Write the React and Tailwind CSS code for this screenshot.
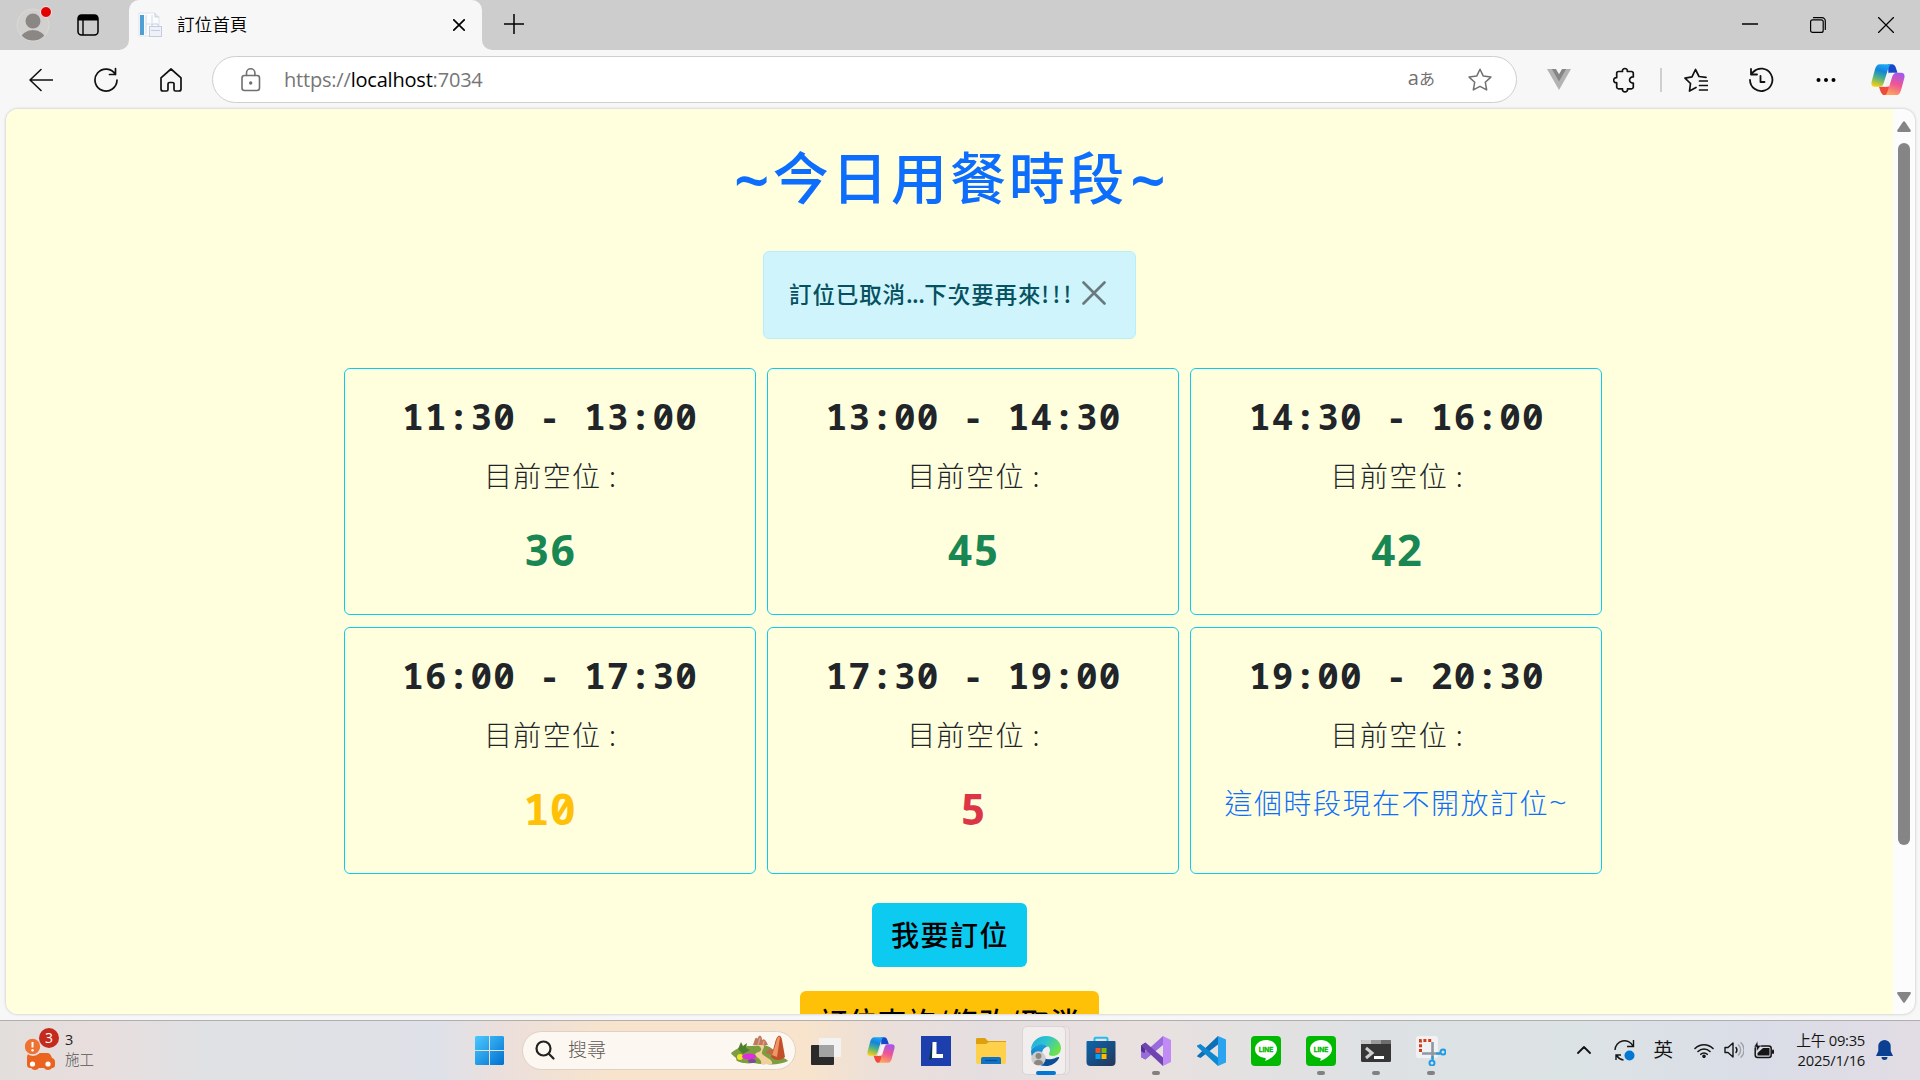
import React from "react";

const ui = "font-['Open_Sans','Noto_Sans_CJK_TC',sans-serif]";
const han = "font-['Noto_Sans_CJK_TC',sans-serif]";
const mono = "font-['Noto_Sans_Mono','DejaVu_Sans_Mono',monospace]";

const slots = [
  { time: "11:30 - 13:00", seats: "36", tone: "text-[#198754]" },
  { time: "13:00 - 14:30", seats: "45", tone: "text-[#198754]" },
  { time: "14:30 - 16:00", seats: "42", tone: "text-[#198754]" },
  { time: "16:00 - 17:30", seats: "10", tone: "text-[#ffc107]" },
  { time: "17:30 - 19:00", seats: "5", tone: "text-[#dc3545]" },
  { time: "19:00 - 20:30", seats: null, tone: "text-[#0d6efd]" },
];

function Line({ children, w = 24, h = 24, sw = 1.6, className = "", box }) {
  return (
    <svg width={w} height={h} viewBox={box || `0 0 ${w} ${h}`} fill="none" stroke="currentColor" strokeWidth={sw} strokeLinecap="round" strokeLinejoin="round" className={`shrink-0 ${className}`}>
      {children}
    </svg>
  );
}

function Favicon() {
  return (
    <svg width="24" height="26" viewBox="0 0 24 26" className="shrink-0">
      <path d="M1 1h16l4 4v19H1z" fill="#fbfcfe" stroke="#dfe3ec" strokeWidth="1" />
      <rect x="2" y="3" width="4" height="20" fill="#4e9fd3" />
      <path d="M8 3v19M14 3v8M8 12h6" stroke="#d4dbe9" strokeWidth="1" />
      <path d="M17 1v4h4" fill="#e5e9f1" stroke="#c9cfdb" strokeWidth="1" />
      <rect x="11.500" y="14.500" width="12" height="10" fill="#eef1f8" stroke="#c3cce0" />
      <path d="M14 14v-2h6v2M13 18.500h9" stroke="#c3cce0" fill="none" />
    </svg>
  );
}

function Copilot({ size, id }) {
  return (
    <svg width={size} height={size * 0.93} viewBox="0 0 34 31" className="shrink-0">
      <defs>
        <linearGradient id={`${id}a`} x1="0.6" y1="0" x2="0.3" y2="1">
          <stop offset="0" stopColor="#1ea8f5" />
          <stop offset=".3" stopColor="#1284dc" />
          <stop offset=".6" stopColor="#4bb08a" />
          <stop offset="1" stopColor="#f6cf13" />
        </linearGradient>
        <linearGradient id={`${id}b`} x1="0.7" y1="0" x2="0.4" y2="1">
          <stop offset="0" stopColor="#a357ee" />
          <stop offset=".5" stopColor="#ee5596" />
          <stop offset="1" stopColor="#ffa35c" />
        </linearGradient>
      </defs>
      <path d="M17 0h4c2 0 3 1 4 4l1.500 4.500h-4c-3 0-4 1-5 3z" fill="#1649c9" />
      <path d="M8 22.500h7l2.500-6 .5 8c-1 4-2 6.500-4 6.500-3 0-4-2-6-8.500z" fill="#ee4b3a" />
      <path d="M9 0h12c-2 0-3 2-4 5l-4 13c-1 3-2 4.500-5 4.500H4c-4 0-4-3.500-3-6.500L4 5c1-3 2-5 5-5z" fill={`url(#${id}a)`} />
      <path d="M25 31H13c2 0 3-2 4-5l4-13c1-3 2-4.500 5-4.500h4c4 0 4 3.500 3 6.500l-3 11c-1 3-2 5-5 5z" fill={`url(#${id}b)`} />
      <path d="M17.500 8.500h5c-1 1-1.500 3-2 4.500l-3 9.500h-5c1-1 1.200-2 1.700-3.500l2.300-7.500z" fill="#f5f2f6" />
    </svg>
  );
}

function TabStrip() {
  return (
    <div className="flex h-[50px] bg-[#cdcdcd] text-black">
      <div className="flex w-[129px] items-center pl-[16px]">
        <div className="relative">
          <svg width="34" height="34" viewBox="0 0 34 34">
            <defs>
              <clipPath id="face"><circle cx="17" cy="17" r="15.500" /></clipPath>
            </defs>
            <circle cx="17" cy="17" r="16" fill="#d2d0ce" stroke="#dcdad7" strokeWidth="1" />
            <g clipPath="url(#face)" fill="#8a8785">
              <circle cx="17" cy="13" r="7.500" />
              <ellipse cx="17" cy="32" rx="12.500" ry="10" />
            </g>
          </svg>
          <span className="absolute -top-0.5 right-[-2px] h-[12px] w-[12px] rounded-full border border-[#ececec] bg-[#e30000]" />
        </div>
        <svg width="22" height="22" viewBox="0 0 22 22" className="ml-[27px]">
          <rect x="1" y="1" width="20" height="20" rx="3.500" fill="none" stroke="#000" strokeWidth="1.500" />
          <path d="M1 6.500V4a3 3 0 0 1 3-3h14a3 3 0 0 1 3 3v2.500z" />
          <path d="M6 6v15" stroke="#000" strokeWidth="1.400" />
        </svg>
      </div>
      <div className="relative flex w-[353px] items-center rounded-t-[10px] bg-[#f7f7f7] pl-[9px]">
        <svg width="10" height="10" className="absolute bottom-0 -left-[10px]"><path d="M10 0v10H0A10 10 0 0 0 10 0z" fill="#f7f7f7" /></svg>
        <svg width="10" height="10" className="absolute -right-[10px] bottom-0"><path d="M0 0v10h10A10 10 0 0 1 0 0z" fill="#f7f7f7" /></svg>
        <Favicon />
        <span className={`${han} ml-[15px] flex-1 pb-[2px] text-[17.600px] font-[350]`}>訂位首頁</span>
        <Line w={12} h={12} sw={1.7} className="mr-[17px]"><path d="M.8.8l10.400 10.400M11.200.8L.8 11.200" /></Line>
      </div>
      <div className="flex flex-1 items-center pl-[22px]">
        <Line w={20} h={20} sw={1.5} className="mb-[2px]"><path d="M10 0v20M0 10h20" /></Line>
        <div className="ml-auto flex items-center">
          <div className="flex w-[68px] justify-center pb-[2px]"><Line w={16} h={2} sw={1.4}><path d="M0 1h16" /></Line></div>
          <div className="flex w-[68px] justify-center">
            <Line w={16} h={16} sw={1.2}><rect x=".6" y="2.800" width="12.600" height="12.600" rx="2" /><path d="M3.500.7H12a3.300 3.300 0 0 1 3.300 3.300v8.500" /></Line>
          </div>
          <div className="flex w-[68px] justify-center"><Line w={16} h={16} sw={1.2}><path d="M.5.5l15 15M15.500.5l-15 15" /></Line></div>
        </div>
      </div>
    </div>
  );
}

function Toolbar() {
  return (
    <div className="flex h-[59px] items-center bg-[#f7f7f7] text-[#111]">
      <Line w={24} h={24} className="ml-[29px]"><path d="M23.500 12H1M12 1.500L1 12l11 10.500" /></Line>
      <Line w={26} h={26} sw={1.7} className="ml-[40px]"><path d="M22.500 7.500A11 11 0 1 0 24 13M22.500 1.500v6h-6" /></Line>
      <Line w={22} h={24} sw={1.7} className="ml-[41px]"><path d="M1 9.800L11 1l10 8.800V21a2 2 0 0 1-2 2h-3.500a1.500 1.500 0 0 1-1.500-1.500V16a1.500 1.500 0 0 0-1.500-1.500h-3A1.500 1.500 0 0 0 8 16v5.500A1.500 1.500 0 0 1 6.500 23H3a2 2 0 0 1-2-2z" /></Line>
      <div className="ml-[30px] flex h-[47px] w-[1305px] items-center rounded-full border border-[#cecece] bg-white text-[#707070]">
        <Line w={20} h={24} sw={1.6} className="ml-[28px]"><rect x="1" y="7.500" width="17.500" height="15" rx="2.500" /><path d="M5.500 7.500V5a4.200 4.200 0 0 1 8.400 0v2.500" /><circle cx="9.700" cy="15" r=".9" fill="currentColor" /></Line>
        <span className={`${ui} ml-[23px] flex-1 text-[20px] tracking-[-0.200px] text-[#767676]`}>https://<span className="text-black">localhost</span>:7034</span>
        <span className="mr-[33px] flex items-baseline pb-[3px] whitespace-nowrap"><span className="font-['Open_Sans'] text-[20px] leading-none">a</span><span className={`${han} text-[16px] leading-none`}>あ</span></span>
        <Line w={24} h={24} sw={1.5} className="mr-[24px]"><path d="M12 1.200l3.300 6.900 7.600 1-5.600 5.200 1.400 7.600L12 18.300 5.300 21.900l1.400-7.600L1.100 9.100l7.600-1z" /></Line>
      </div>
      <svg width="24" height="21" viewBox="0 0 24 21" className="ml-[30px]"><path d="M0 0h24L12 21z" fill="#b3b3b3" /><path d="M4.800 0H9l3 5 3-5h4.200L12 12.600z" fill="#868686" /><path d="M9 0h6l-3 5z" fill="#f7f7f7" /></svg>
      <Line w={24} h={26} sw={1.7} className="ml-[42px]"><path d="M5.500 4.500h4c-.8-4 5.600-4 4.800 0h4.200A1.800 1.800 0 0 1 20.300 6.300V10c-5-.6-5 6.500 0 6v4a1.800 1.800 0 0 1-1.800 1.800h-4c.8 4.200-5.800 4.200-5 0h-4A1.800 1.800 0 0 1 3.700 20v-4.300c-4 .6-4-5.600 0-5V6.300A1.800 1.800 0 0 1 5.500 4.500z" /></Line>
      <span className="ml-[23px] h-[24px] w-[2px] bg-[#cfcfcf]" />
      <Line w={24} h={24} sw={1.7} className="ml-[22px]"><path d="M12 19.500L5.500 23l1-7.500L1 10.200l7-1.400L11.500 1.500 15 8.500l7 .8M15.500 13h8M15.500 17.500h8M15.500 22h8" /></Line>
      <Line w={26} h={26} sw={1.8} className="ml-[40px]"><path d="M2 13a11.200 11.200 0 1 0 3.200-8L3 7M3 2v5.500h6M12.500 9v6h4" /></Line>
      <svg width="20" height="6" viewBox="0 0 20 6" className="ml-[42px]"><circle cx="2.500" cy="3" r="2" /><circle cx="10" cy="3" r="2" /><circle cx="17.500" cy="3" r="2" /></svg>
      <div className="ml-[35px]"><Copilot size={34} id="top" /></div>
    </div>
  );
}

function Slot({ time, seats, tone }) {
  return (
    <div className="flex h-[247px] flex-col items-center rounded-[6px] border border-[#0dcaf0]">
      <div className={`${mono} mt-[24px] h-[48px] pl-[1px] text-[36px] leading-[48px] font-bold tracking-[1.150px] whitespace-pre text-[#212529]`}>{time}</div>
      <div className={`${han} mt-[13px] h-[42px] pl-[2px] text-[28px] leading-[42px] font-light tracking-[1.400px] whitespace-pre text-[#212529]`}>目前空位 :</div>
      {seats ? (
        <div className={`${mono} mt-[23px] h-[60px] text-[43.500px] leading-[60px] font-bold ${tone}`}>{seats}</div>
      ) : (
        <div className={`${han} mt-[26px] h-[42px] text-[28px] leading-[42px] font-light tracking-[1.500px] whitespace-nowrap ${tone}`}>
          這個時段現在不開放訂位<span className="font-['Open_Sans'] text-[31px] leading-none">~</span>
        </div>
      )}
    </div>
  );
}

function Page() {
  return (
    <div className="flex h-[905px] overflow-hidden rounded-[12px] bg-[#fcfcfc] shadow-[0_0_3px_rgba(0,0,0,0.25)]">
      <main className={`${han} flex w-[1887px] flex-col items-center overflow-hidden bg-[#ffffde]`}>
        <h1 className="mt-[26px] flex h-[80px] justify-center pl-[4px] text-[56px] leading-[80px] font-medium tracking-[3.100px] whitespace-nowrap text-[#0d6efd]">
          <span className="mt-[4px] font-['Noto_Sans'] text-[62px] font-semibold">~</span>今日用餐時段<span className="mt-[4px] ml-[3px] font-['Noto_Sans'] text-[62px] font-semibold">~</span>
        </h1>
        <div className="mt-[36px] flex h-[88px] w-[373px] shrink-0 rounded-[6px] border border-[#b6effb] bg-[#cff4fc] pl-[25px] text-[#055160]">
          <span className="mt-[25px] h-[32px] w-[293px] text-[22.500px] leading-[32px] font-medium tracking-[0.900px] whitespace-nowrap">
            訂位已取消<span className="tracking-[-0.600px]">...</span>下次要再來<span className="tracking-[3.300px]">!!!</span>
          </span>
          <Line w={24} h={24} sw={2.6} className="mt-[29px] text-[#677a7e]"><path d="M1.500 1.500l21 21M22.500 1.500l-21 21" /></Line>
        </div>
        <div className="mt-[29px] ml-[47px] grid shrink-0 grid-cols-[412px_412px_412px] gap-x-[11.300px] gap-y-[12px]">
          {slots.map((s) => <Slot key={s.time} {...s} />)}
        </div>
        <button className="mt-[29px] h-[64px] w-[155px] shrink-0 rounded-[6px] bg-[#0dcaf0] pb-[3px] pl-[1px] text-[28px] font-medium tracking-[1.500px] text-black">我要訂位</button>
        <button className="mt-[24px] h-[64px] w-[299px] shrink-0 rounded-[6px] bg-[#ffc107] pb-[4px] text-[28px] font-medium tracking-[1.500px] whitespace-nowrap text-black">訂位查詢/修改/取消</button>
      </main>
      <div className="flex w-[22px] flex-col items-center pt-[12px]">
        <svg width="14" height="11" viewBox="0 0 14 11"><path d="M6 .8a1.300 1.300 0 0 1 2 0l5.700 8.400c.4.8 0 1.800-1 1.800H1.300c-1 0-1.400-1-1-1.800z" fill="#858585" /></svg>
        <div className="mt-[11px] h-[702px] w-[12px] rounded-full bg-[#858585]" />
        <svg width="14" height="11" viewBox="0 0 14 11" className="mt-[147px]"><path d="M6 10.200a1.300 1.300 0 0 0 2 0l5.700-8.400C14.100 1 13.700 0 12.700 0H1.300C.3 0-.1 1 .3 1.800z" fill="#858585" /></svg>
      </div>
    </div>
  );
}

function Widgets() {
  return (
    <svg width="32" height="38" viewBox="0 0 32 38">
      <path d="M5 20h17c3 0 4 2 5 5 2 .5 3 2 3 4v3c0 2-1 3-3 3a5 5 0 0 1-8 0h-5a5 5 0 0 1-8 0c-3 0-4-1-4-4v-6c0-3 1-5 3-5z" fill="#ea6420" />
      <circle cx="8" cy="14" r="9" fill="#e6dfde" />
      <circle cx="7.500" cy="13.500" r="7.700" fill="#ee7332" />
      <path d="M7.500 9v5.500" stroke="#fff" strokeWidth="2" />
      <circle cx="7.500" cy="17.300" r="1.200" fill="#fff" />
      <circle cx="7.500" cy="31" r="2.600" fill="#fff" />
      <circle cx="23" cy="31" r="2.600" fill="#fff" />
    </svg>
  );
}

function Landscape() {
  return (
    <svg width="57" height="31" viewBox="0 0 57 31" className="shrink-0">
      <path d="M0 18c6-5 12-7 20-7l12-1c6 0 12 6 16 10 4 3 8 4 9 6-6 3-15 4-22 3-5 1-9-1-13-1-6 1-14 0-17-3 2-2-4-4-5-7z" fill="#7d9e3f" />
      <path d="M19 10c8-1 12 2 11 5s-8 2-5 6c3 3 6 4 5 8h11c2-5-12-8-10-12 1-4 5-7-2-8z" fill="#f3cf9c" />
      <path d="M22 10l2-6c1-2 2-1 2 0l2-3c2-1 3 1 3 4 2-2 3 0 4 1l2 4z" fill="#c07860" />
      <path d="M27 10l2-7M32 10l1-4" stroke="#e0a58e" strokeWidth="1.200" />
      <path d="M34 18l4-4 4 1v5z" fill="#c3674b" />
      <path d="M40 22l4-14c2-9 6-9 7-3l3 17c-4 4-10 4-14 0z" fill="#c24f2a" />
      <path d="M41 20l4-12c1-6 3-7 4-6l-3 20z" fill="#ef9667" />
      <path d="M7 14l3-7 2 4 4-3-1 5 4 2-7 4z" fill="#4e7f2c" />
      <circle cx="9" cy="22" r="3" fill="#f4e429" />
      <ellipse cx="18" cy="21.500" rx="7" ry="3" fill="#e32ae0" />
      <ellipse cx="21" cy="26" rx="4" ry="2" fill="#7d4a9c" />
    </svg>
  );
}

function LineLogo() {
  return (
    <svg width="30" height="30" viewBox="0 0 30 30">
      <rect width="30" height="30" rx="4" fill="#00b900" />
      <path d="M15 4C9 4 4 8 4 13c0 5 4 8 10 9 1 0 1 1 0 3 5-2 12-6 12-12 0-5-5-9-11-9z" fill="#fff" />
      <text x="15" y="16.300" textAnchor="middle" fontSize="6.600" fontWeight="700" fontFamily="Inter" fill="#00b900" stroke="#00b900" strokeWidth=".3">LINE</text>
    </svg>
  );
}

const apps = [
  {
    name: "taskview",
    icon: <svg width="32" height="30" viewBox="0 0 32 30"><rect x="1" y="9" width="23" height="20" rx="1" fill="#2a2a2a" /><rect x="9" y="2" width="22" height="19" rx="1" fill="#f2f2f2" /><rect x="9" y="9" width="15" height="12" fill="#a3a3a3" /></svg>,
  },
  { name: "copilot", icon: <Copilot size={28} id="task" /> },
  {
    name: "lapp",
    icon: <svg width="30" height="30" viewBox="0 0 30 30"><rect width="30" height="30" fill="#1c3fad" /><path d="M11 6L8 24l4-2h6z" fill="#04353f" /><path d="M11.500 6h4v12H22v4H11z" fill="#fff" /></svg>,
  },
  {
    name: "files",
    icon: <svg width="30" height="26" viewBox="0 0 30 26"><path d="M0 1.500C0 .5.500 0 1.500 0H9l3 3h18v5H0z" fill="#dea00c" /><path d="M0 6h10l3-2h17v20a2 2 0 0 1-2 2H2a2 2 0 0 1-2-2z" fill="#ffd04a" /><path d="M5 26v-5a2 2 0 0 1 2-2h16a2 2 0 0 1 2 2v5z" fill="#0f73c7" /><path d="M9 22.500h12" stroke="#0a4d91" strokeWidth="1.200" /></svg>,
  },
  {
    name: "edge",
    open: "active",
    icon: (
      <svg width="30" height="30" viewBox="0 0 30 30">
        <defs>
          <linearGradient id="ea" x1="0" y1="0" x2="1" y2=".5"><stop offset="0" stopColor="#23a8e0" /><stop offset=".5" stopColor="#2fc3cf" /><stop offset="1" stopColor="#6de24b" /></linearGradient>
          <linearGradient id="eb" x1="0" y1="0" x2="0" y2="1"><stop offset="0" stopColor="#1aa0e0" /><stop offset="1" stopColor="#0a62b4" /></linearGradient>
        </defs>
        <path d="M0 14C0 6 7 0 15 0c9 0 15 6 15 12 0 5-4 8-8 8-3 0-4-1-4-2s1-2 1-4c0-3-3-5-7-5C6 9 1 11 0 14z" fill="url(#ea)" />
        <path d="M0 15c1-4 6-6.500 11-6.500 3 0 5 1 6 2-4 .5-6 4-6 7 0 6 5 9 10 9-2 2-4 3.500-7 3.500C6 30 0 23 0 15z" fill="url(#eb)" />
        <path d="M11 17c0 6 6 7 10 6 3-.5 5-2 6.500-2 .8 0 .8.500.3 1.400C25 27 20 30 15 30c-5-3-6-9-4-13z" fill="#0d4f99" />
        <circle cx="7.500" cy="22.500" r="7.200" fill="#cfcdcb" />
        <circle cx="7.500" cy="20" r="3" fill="#8a8785" />
        <path d="M3 27.500c0-5 9-5 9 0-2 2.300-7 2.300-9 0z" fill="#8a8785" />
      </svg>
    ),
  },
  {
    name: "store",
    icon: <svg width="30" height="30" viewBox="0 0 30 30"><defs><linearGradient id="st" x1="0" y1="0" x2="1" y2="1"><stop offset="0" stopColor="#0b66ad" /><stop offset="1" stopColor="#25355a" /></linearGradient></defs><path d="M8.500 6V3a1.300 1.300 0 0 1 1.300-1.300h10.400A1.300 1.300 0 0 1 21.500 3v3" fill="none" stroke="#20bdf1" strokeWidth="2" /><path d="M.5 6a1 1 0 0 1 1-1h27a1 1 0 0 1 1 1v20a4 4 0 0 1-4 4h-21a4 4 0 0 1-4-4z" fill="url(#st)" /><path d="M9.500 12h5v5h-5z" fill="#f25022" /><path d="M15.500 12h5v5h-5z" fill="#7fba00" /><path d="M9.500 18h5v5h-5z" fill="#00a4ef" /><path d="M15.500 18h5v5h-5z" fill="#ffb900" /></svg>,
  },
  {
    name: "vs",
    open: "idle",
    icon: <svg width="30" height="30" viewBox="0 0 30 30"><path d="M0 9.500L4.500 6.500v17L0 21z" fill="#52308f" /><path d="M0 21l4.500 2.500L22 9V0L3 17l-3-2z" fill="#9a6bdc" /><path d="M4.500 6.500L22 21.500V30L0 9.500z" fill="#7044b0" /><path d="M22 0l8 4v22l-8 4z" fill="#c08bf5" /></svg>,
  },
  {
    name: "vscode",
    icon: <svg width="30" height="30" viewBox="0 0 30 30"><path d="M1.500 19.500L22 0v8.500L4.500 22 1 20.600z" fill="#0b70b8" /><path d="M1 9.500L4.500 8 22 21.500V30L1 10.600z" fill="#1088d0" /><path d="M22 0l8 3.500v23L22 30z" fill="#2aa3f0" /></svg>,
  },
  { name: "line1", icon: <LineLogo /> },
  { name: "line2", open: "idle", icon: <LineLogo /> },
  {
    name: "terminal",
    open: "idle",
    icon: <svg width="30" height="22" viewBox="0 0 30 22"><rect width="30" height="22" rx="1.500" fill="#363636" /><path d="M0 4V1.500C0 .5.500 0 1.500 0H10v4z" fill="#cacaca" /><path d="M10 0h10v4H10z" fill="#9a9a9a" /><path d="M20 0h8.500c1 0 1.500.5 1.500 1.500V4H20z" fill="#6d6d6d" /><path d="M5 8l6 5-6 5" fill="none" stroke="#cfcfcf" strokeWidth="3" /><rect x="13" y="16" width="10" height="3" fill="#fff" /></svg>,
  },
  {
    name: "snip",
    open: "idle",
    icon: <svg width="30" height="30" viewBox="0 0 30 30"><rect width="22" height="22" rx="2.500" fill="#f1f1f4" /><path d="M4.500 16V4.500H16" fill="none" stroke="#d23c12" strokeWidth="3" strokeDasharray="3 1.800" /><path d="M16.500 6v17M6 17.500h18" stroke="#8d98a3" strokeWidth="2.600" /><circle cx="16" cy="27" r="2.500" fill="none" stroke="#1e9be6" strokeWidth="2" /><circle cx="27" cy="16" r="2.500" fill="none" stroke="#1e9be6" strokeWidth="2" /><path d="M16.500 20v4M20 17.500h4" stroke="#1e9be6" strokeWidth="2" /></svg>,
  },
];

function Taskbar() {
  return (
    <div className={`${ui} flex h-[60px] items-center border-t border-[#b0aeae] bg-[linear-gradient(90deg,#e2dedb_0%,#e8dedd_5%,#dfe1e4_11%,#dfe1e8_23%,#ebdfdc_26%,#f8e4cc_32%,#f8e4cc_42%,#ebdfda_46%,#e5dee0_51%,#e9e1df_59%,#dde1e4_72%,#dce3e5_82%,#dadde7_92%,#e2dce4_100%)] pb-[1px] text-[#222]`}>
      <div className="relative ml-[25px] h-[38px] w-[40px] pt-0.5">
        <Widgets />
        <span className="absolute top-[-3px] left-[14px] flex h-[20px] w-[20px] items-center justify-center rounded-full bg-[#c42b1c] text-[14px] leading-none text-white">3</span>
      </div>
      <div className="w-[410px] text-[14.500px] leading-[20px]">
        <div>3</div>
        <div className="font-light text-[#555]">施工</div>
      </div>
      <svg width="29" height="29" viewBox="0 0 29 29" className="shrink-0">
        <defs><linearGradient id="win" x1="0" y1="0" x2="1" y2="1"><stop offset="0" stopColor="#4cc9ff" /><stop offset="1" stopColor="#0070cf" /></linearGradient></defs>
        <path d="M1 0h13v14H0V1zM15 0h13l1 1v13H15zM0 15h14v14H1l-1-1zM15 15h14v13l-1 1H15z" fill="url(#win)" />
      </svg>
      <div className="ml-[18px] flex h-[39px] w-[274px] shrink-0 items-center rounded-full border border-[#dfd2c4] bg-[#fdf7f1]">
        <Line w={20} h={20} sw={2.2} className="ml-[12px]"><circle cx="8.500" cy="8.500" r="7" /><path d="M13.800 13.800l4.700 4.700" /></Line>
        <span className="ml-[13px] flex-1 text-[19px] leading-none font-light text-[#5d5a57]">搜尋</span>
        <div className="mr-[7px]"><Landscape /></div>
      </div>
      <div className="ml-[2px] flex h-[59px] pt-[1px]">
        {apps.map((a) => (
          <div key={a.name} className="relative flex w-[55px] items-center justify-center">
            {a.open === "active" && <span className="absolute top-[4px] left-[4px] h-[49px] w-[48px] rounded-[5px] border border-[#ddd5d5] bg-[#ece5e5]" />}
            {a.open === "active" && <span className="absolute top-[4px] left-[4px] h-[49px] w-[44px] rounded-[5px] border border-[#ddd5d5] bg-[#f3eeee]" />}
            <span className="relative">{a.icon}</span>
            {a.open === "active" && <span className="absolute bottom-[5px] left-[18px] h-[4px] w-[20px] rounded-full bg-[#0078d4]" />}
            {a.open === "idle" && <span className="absolute bottom-[5px] left-[24px] h-[4px] w-[8px] rounded-full bg-[#838080]" />}
          </div>
        ))}
      </div>
      <div className="ml-auto flex items-center text-[#151515]">
        <Line w={14} h={8} sw={1.8}><path d="M1 7l6-6 6 6" /></Line>
        <svg width="21" height="21" viewBox="0 0 21 21" className="ml-[23px]"><path d="M1 10A9.500 9.500 0 0 1 19 6M19.500 0v6.500H13M2 20v-5h5M2.500 15.500c2 3 4 4 7 4.500" fill="none" stroke="#151515" strokeWidth="1.400" /><circle cx="15.500" cy="15.500" r="5" fill="#0078d4" /></svg>
        <span className="ml-[18px] text-[19.500px]">英</span>
        <Line w={20} h={15} sw={1.6} className="ml-[21px]"><path d="M1 5.500a12.700 12.700 0 0 1 18 0M4 8.500a8.500 8.500 0 0 1 12 0M6.800 11.300a4.500 4.500 0 0 1 6.400 0" /><circle cx="10" cy="13.300" r="1" fill="currentColor" /></Line>
        <Line w={20} h={18} sw={1.4} className="ml-[10px]"><path d="M1 6.500h3L9 2v14l-5-4.500H1zM12 6.500a4 4 0 0 1 0 5" /><path d="M14.500 4a7 7 0 0 1 0 10M17 1.800a10 10 0 0 1 0 14.400" className="opacity-30" /></Line>
        <svg width="20" height="18" viewBox="0 0 20 18" className="ml-[10px]"><rect x="1.200" y="5" width="16" height="11.500" rx="2.500" fill="none" stroke="#151515" strokeWidth="1.500" /><path d="M9 7h6.500v7.500h-12V12z" fill="#151515" /><rect x="18" y="8.500" width="2" height="4.500" rx="1" fill="#151515" /><path d="M3.500 0L0 6h2.500v4.500L7 4.500H4z" fill="#151515" stroke="#dcdfe6" strokeWidth=".5" /></svg>
        <div className="ml-[20px] w-[71px] text-right text-[14.800px] leading-[20px] tracking-[-0.300px] whitespace-nowrap">
          <div>上午 09:35</div>
          <div>2025/1/16</div>
        </div>
        <svg width="17" height="20" viewBox="0 0 17 20" className="mr-[27px] ml-[11px]"><path d="M8.500 0a6.200 6.200 0 0 1 6.200 6.200V11L17 16H0l2.300-5V6.200A6.200 6.200 0 0 1 8.500 0zM5.500 17h6a3 3 0 0 1-6 0z" fill="#0b3f91" /></svg>
      </div>
    </div>
  );
}

export default function App() {
  return (
    <div className="flex h-[1080px] w-[1920px] flex-col overflow-hidden bg-[#f7f7f7]">
      <TabStrip />
      <Toolbar />
      <div className="h-[911px] shrink-0 pr-[5px] pl-[6px]"><Page /></div>
      <Taskbar />
    </div>
  );
}
